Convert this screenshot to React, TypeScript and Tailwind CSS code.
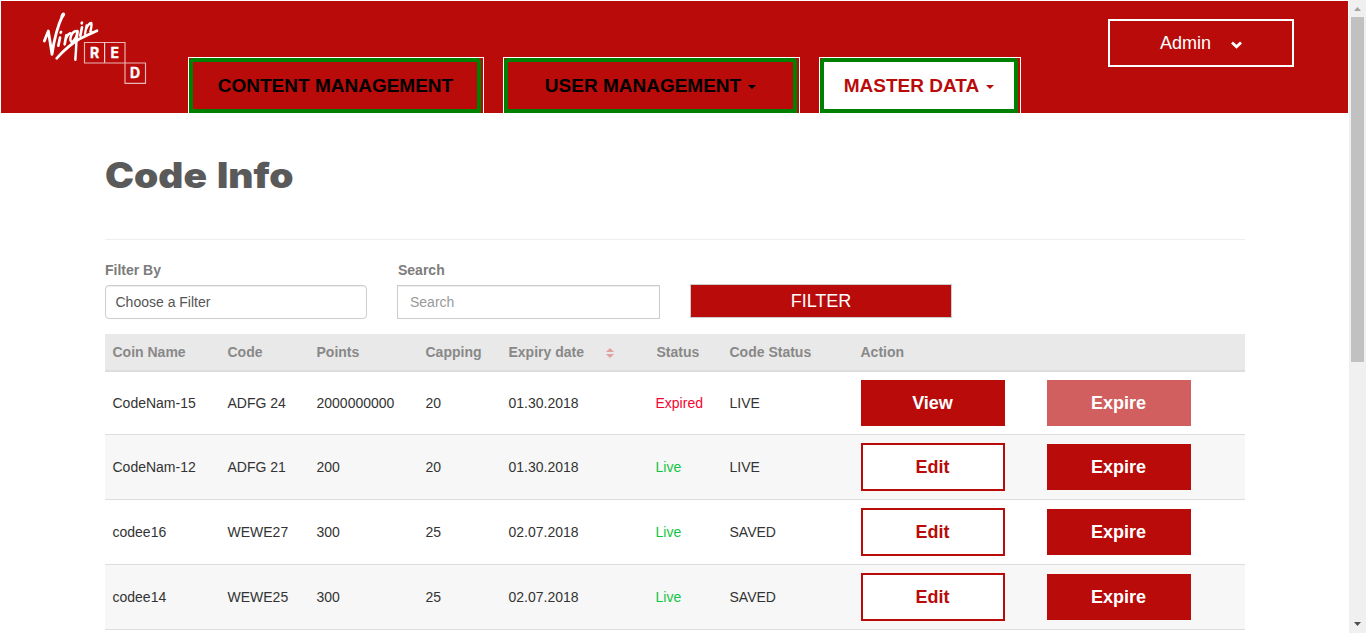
import type { ReactNode } from "react";

type Row = {
  name: string;
  code: string;
  points: string;
  capping: string;
  expiry: string;
  status: "Live" | "Expired";
  codeStatus: string;
};

const rows: Row[] = [
  { name: "CodeNam-15", code: "ADFG 24", points: "2000000000", capping: "20", expiry: "01.30.2018", status: "Expired", codeStatus: "LIVE" },
  { name: "CodeNam-12", code: "ADFG 21", points: "200", capping: "20", expiry: "01.30.2018", status: "Live", codeStatus: "LIVE" },
  { name: "codee16", code: "WEWE27", points: "300", capping: "25", expiry: "02.07.2018", status: "Live", codeStatus: "SAVED" },
  { name: "codee14", code: "WEWE25", points: "300", capping: "25", expiry: "02.07.2018", status: "Live", codeStatus: "SAVED" },
];

const columns = "grid grid-cols-[115px_89px_109px_83px_148px_73px_131px_1fr] pl-[7.5px]";

function Logo() {
  return (
    <svg className="ml-[39px] mt-[9px] h-[77px] w-[110px] shrink-0" viewBox="120 30 330 231" fill="none" stroke="#fff" strokeLinecap="round" strokeLinejoin="round">
      <path d="M133 123 L145 93 Q151 130 156 163 Q166 92 189 44" strokeWidth="8.500" />
      <path d="M187 48 L190 43" strokeWidth="11" />
      <path d="M175 137 L180 113 M182 98 L183 96" strokeWidth="8" />
      <path d="M194 133 L199 106 M197 118 Q202 103 211 100" strokeWidth="8" />
      <path d="M232 93 Q215 92 211 116 Q211 129 220 123 Q229 116 233 94 Q228 124 228 150 L226 179" strokeWidth="7.500" />
      <path d="M241 107 L246 82 M245 70 L246 68" strokeWidth="8" />
      <path d="M255 102 L260 76 M258 88 Q265 70 274 69 Q276 76 271 95 Q273 101 278 96" strokeWidth="7" />
      <path d="M170 175 Q203 138 238 117 Q264 104 291 92" strokeWidth="8" />
      <path d="M253.500 127.500 H375 V189 H253.500 Z M375 189 H436.500 V250 H375 Z" strokeWidth="3.500" strokeOpacity=".7" strokeLinejoin="miter" />
      <path d="M314 128 V188" strokeWidth="3" strokeLinecap="butt" />
      <g fill="#fff" stroke="#fff" strokeWidth="1" fontFamily="Inter, sans-serif" fontWeight="700" fontSize="42" textAnchor="middle">
        <text x="284" y="174">R</text>
        <text x="344" y="174">E</text>
        <text x="405" y="235">D</text>
      </g>
    </svg>
  );
}

function Caret() {
  return (
    <svg className="ml-[7px] mt-[2px] h-1 w-2" viewBox="0 0 8 4" fill="currentColor">
      <path d="M0 0H8L4 4Z" />
    </svg>
  );
}

function Tab({ className, inner, children }: { className: string; inner: string; children: ReactNode }) {
  return (
    <div className={`h-14 border border-b-0 border-white pr-[2px] ${className}`}>
      <a className={`flex h-[55px] items-center justify-center rounded-t-[4px] border-4 border-[#008000] pt-px text-[19px] font-bold ${inner}`}>
        {children}
      </a>
    </div>
  );
}

function Header() {
  return (
    <header className="flex h-28 bg-[#b80b0a]">
      <Logo />
      <nav className="mt-14 flex">
        <Tab className="ml-[38px] w-[296px]" inner="pl-px text-black">CONTENT MANAGEMENT</Tab>
        <Tab className="ml-[19px] w-[297px]" inner="text-black">
          USER MANAGEMENT
          <Caret />
        </Tab>
        <Tab className="ml-[19px] w-[202px]" inner="bg-white text-[#b80b0a]">
          MASTER DATA
          <Caret />
        </Tab>
      </nav>
      <button className="ml-auto mr-[54px] mt-[18px] flex h-12 w-[186px] items-center border-2 border-white pl-[50px] text-[18px] text-white">
        Admin
        <svg className="ml-5 mt-[3px] h-[8px] w-[11px]" viewBox="0 0 11 8" fill="none" stroke="#fff" strokeWidth="2.800">
          <path d="M1 1.500 L5.500 5.800 L10 1.500" />
        </svg>
      </button>
    </header>
  );
}

function Filters() {
  return (
    <div className="flex">
      <div className="w-[292px]">
        <div className="h-5 text-sm font-bold leading-5 text-[#7c7c7c]">Filter By</div>
        <div className="mt-[5px] flex h-[34px] w-[262px] items-center rounded-[4px] border border-[#ccc] px-[9.5px] text-sm text-[#555] shadow-[inset_0_1px_1px_rgba(0,0,0,0.075)]">
          Choose a Filter
        </div>
      </div>
      <div className="w-[293px]">
        <div className="h-5 pl-px text-sm font-bold leading-5 text-[#7c7c7c]">Search</div>
        <input
          className="mt-[5px] block h-[34px] w-[263px] border border-[#ccc] px-3 text-sm shadow-[inset_0_1px_1px_rgba(0,0,0,0.075)] placeholder:text-[#999]"
          placeholder="Search"
        />
      </div>
      <button className="mt-6 flex h-[34px] w-[262px] items-center justify-center border border-[#ccc] bg-[#b80b0a] pt-px text-[18px] text-white">
        FILTER
      </button>
    </div>
  );
}

function Table() {
  return (
    <div className="mt-[15px] text-sm text-[#333]">
      <div className={`${columns} h-[38px] items-center border-b-2 border-[#ddd] bg-[#e9e9e9] font-bold text-[#888]`}>
        <span>Coin Name</span>
        <span>Code</span>
        <span>Points</span>
        <span>Capping</span>
        <span className="flex items-center">
          Expiry date
          <svg className="ml-[22px] mt-[2px] h-[10px] w-2" viewBox="0 0 8 10" fill="#dfa0a0">
            <path d="M0 4L4 0L8 4ZM0 6H8L4 10Z" />
          </svg>
        </span>
        <span>Status</span>
        <span>Code Status</span>
        <span>Action</span>
      </div>
      {rows.map((row) => {
        const expired = row.status === "Expired";
        return (
          <div key={row.name} className={`${columns} items-center border-b border-[#ddd] even:bg-white odd:bg-[#f7f7f7] ${expired ? "h-[63px]" : "h-[65px]"}`}>
            <span>{row.name}</span>
            <span>{row.code}</span>
            <span>{row.points}</span>
            <span>{row.capping}</span>
            <span>{row.expiry}</span>
            <span className={`-ml-px ${expired ? "text-[#f5052f]" : "text-[#11c544]"}`}>{row.status}</span>
            <span>{row.codeStatus}</span>
            <div className="flex items-center gap-[42px] pl-[0.5px] text-[18px] font-bold">
              {expired ? (
                <button className="h-[46px] w-36 bg-[#b80b0a] pr-px pt-[2px] text-white">View</button>
              ) : (
                <button className="h-12 w-36 border-2 border-[#b80b0a] bg-white pr-px pt-[2px] text-[#b80b0a]">Edit</button>
              )}
              <button className={`h-[46px] w-36 pr-px pt-[2px] text-white ${expired ? "bg-[#d15f60]" : "bg-[#b80b0a]"}`}>Expire</button>
            </div>
          </div>
        );
      })}
    </div>
  );
}

function Scrollbar() {
  return (
    <div className="flex w-[17px] shrink-0 flex-col items-center bg-[#f0f0f0]">
      <svg className="h-[17px] w-[17px] shrink-0" viewBox="0 0 17 17" fill="#a3a3a3">
        <path d="M5 11H12L8.500 7Z" />
      </svg>
      <div className="-ml-px h-[345px] w-[13px] bg-[#c1c1c1]" />
      <svg className="mt-auto h-[17px] w-[17px] shrink-0" viewBox="0 0 17 17" fill="#505050">
        <path d="M5 6H12L8.500 10Z" />
      </svg>
    </div>
  );
}

export default function App() {
  return (
    <div className="flex h-[633px] w-[1366px] overflow-hidden bg-white font-['Liberation_Sans',Arial,sans-serif]">
      <div className="w-[1349px] pl-px pr-px pt-px">
        <Header />
        <main className="ml-[104px] w-[1140px]">
          <h1 className="flex h-[127px] items-center border-b border-[#eee] pb-[2px] font-[Inter,sans-serif] text-[35px] font-black text-[#5a5a5a]">
            <span className="inline-block origin-left scale-x-[1.11] [word-spacing:2px]">Code Info</span>
          </h1>
          <div className="pt-5">
            <Filters />
            <Table />
          </div>
        </main>
      </div>
      <Scrollbar />
    </div>
  );
}
